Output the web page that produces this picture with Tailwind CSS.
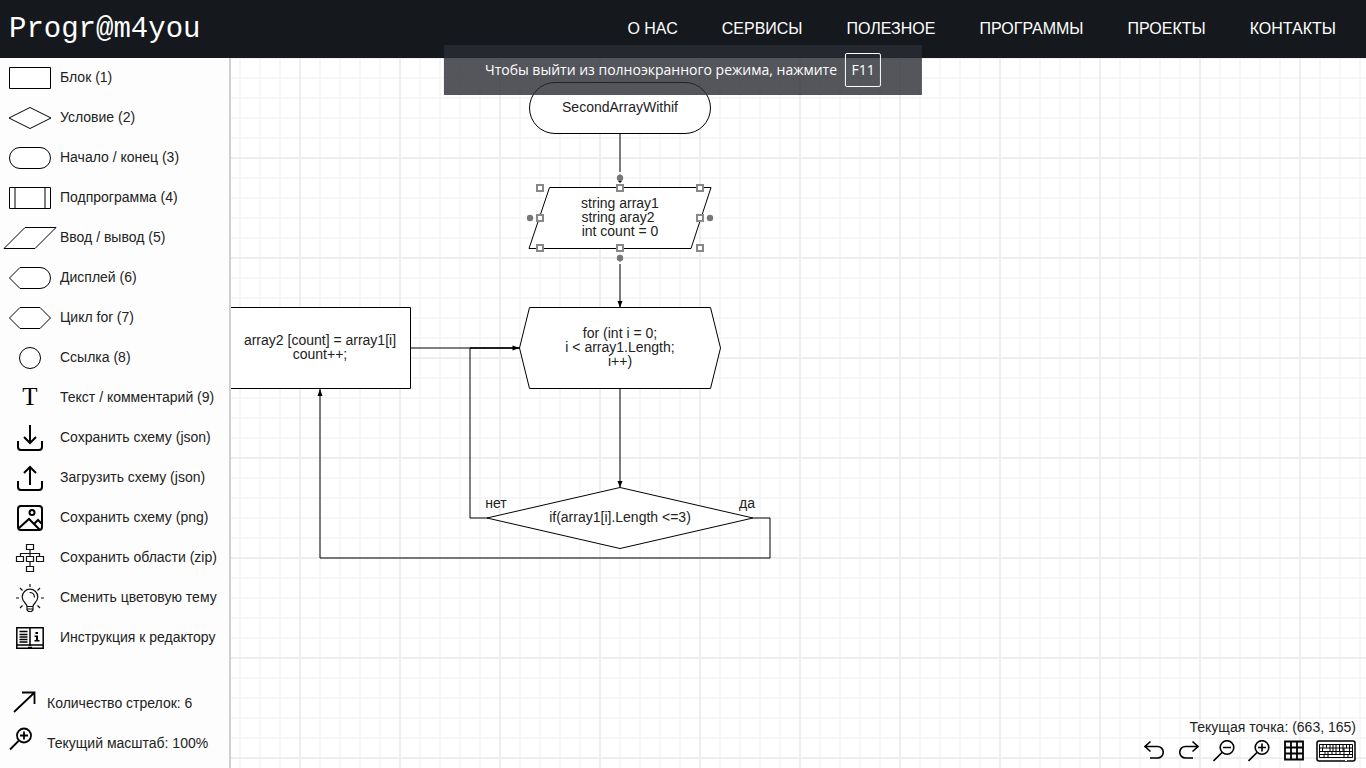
<!DOCTYPE html>
<html lang="ru">
<head>
<meta charset="utf-8">
<meta name="viewport" content="width=device-width, initial-scale=1">
<title>Progr@m4you</title>
<script src="https://cdn.jsdelivr.net/npm/@tailwindcss/browser@4"></script>
</head>
<body class="relative flex h-screen flex-col overflow-hidden bg-white font-['Liberation_Sans',Arial,sans-serif] text-sm text-[#222]">

<header class="flex h-[58px] shrink-0 items-center justify-between bg-[#15191d] pr-[30px] pl-[9px] text-white">
  <a href="#" class="pt-0.5 font-['Liberation_Mono',monospace] text-[29px] leading-8">Progr@m4you</a>
  <nav class="flex gap-11 text-base">
    <a href="#">О НАС</a>
    <a href="#">СЕРВИСЫ</a>
    <a href="#">ПОЛЕЗНОЕ</a>
    <a href="#">ПРОГРАММЫ</a>
    <a href="#">ПРОЕКТЫ</a>
    <a href="#">КОНТАКТЫ</a>
  </nav>
</header>

<div class="flex min-h-0 flex-1">
  <aside class="flex w-[231px] shrink-0 flex-col border-r-2 border-[#d0d0d0] bg-[#fdfdfd] pb-[5px]">
    <button class="flex h-10 items-center pb-0.5 text-left whitespace-nowrap"><svg class="mt-0.5 h-10 w-[60px] shrink-0" viewBox="0 0 60 40" fill="#fff" stroke="#000"><path d="M9.5 9.5h41v21h-41z"/></svg>Блок (1)</button>
    <button class="flex h-10 items-center pb-0.5 text-left whitespace-nowrap"><svg class="mt-0.5 h-10 w-[60px] shrink-0" viewBox="0 0 60 40" fill="#fff" stroke="#000"><path d="M9 20 30 9.500 51 20 30 30.500z"/></svg>Условие (2)</button>
    <button class="flex h-10 items-center pb-0.5 text-left whitespace-nowrap"><svg class="mt-0.5 h-10 w-[60px] shrink-0" viewBox="0 0 60 40" fill="#fff" stroke="#000"><rect x="9.500" y="9.500" width="41" height="21" rx="10.500"/></svg>Начало / конец (3)</button>
    <button class="flex h-10 items-center pb-0.5 text-left whitespace-nowrap"><svg class="mt-0.5 h-10 w-[60px] shrink-0" viewBox="0 0 60 40" fill="#fff" stroke="#000"><path d="M9.500 9.500h41v21h-41zM15 10v20M45 10v20"/></svg>Подпрограмма (4)</button>
    <button class="flex h-10 items-center pb-0.5 text-left whitespace-nowrap"><svg class="mt-0.5 h-10 w-[60px] shrink-0" viewBox="0 0 60 40" fill="#fff" stroke="#000"><path d="M4 30.500 25 9.500H56L35 30.500z"/></svg>Ввод / вывод (5)</button>
    <button class="flex h-10 items-center pb-0.5 text-left whitespace-nowrap"><svg class="mt-0.5 h-10 w-[60px] shrink-0" viewBox="0 0 60 40" fill="#fff" stroke="#000"><path d="M9.500 20 20 9.500H40a10.500 10.500 0 0 1 0 21H20z"/></svg>Дисплей (6)</button>
    <button class="flex h-10 items-center pb-0.5 text-left whitespace-nowrap"><svg class="mt-0.5 h-10 w-[60px] shrink-0" viewBox="0 0 60 40" fill="#fff" stroke="#000"><path d="M9.500 20 20 9.500H40L50.500 20 40 30.500H20z"/></svg>Цикл for (7)</button>
    <button class="flex h-10 items-center pb-0.5 text-left whitespace-nowrap"><svg class="mt-0.5 h-10 w-[60px] shrink-0" viewBox="0 0 60 40" fill="#fff" stroke="#000"><circle cx="30" cy="20" r="10.500"/></svg>Ссылка (8)</button>
    <button class="flex h-10 items-center pb-0.5 text-left whitespace-nowrap"><span class="w-[60px] shrink-0 text-center font-['Liberation_Serif',serif] text-[25px] leading-8 text-black">T</span>Текст / комментарий (9)</button>
    <button class="flex h-10 items-center pb-0.5 text-left whitespace-nowrap"><svg class="mt-0.5 h-10 w-[60px] shrink-0" viewBox="0 0 60 40" fill="none" stroke="#000" stroke-width="2"><path d="M30 7v18M24 19l6 6 6-6M18 23v6q0 3 3 3h18q3 0 3-3v-6"/></svg>Сохранить схему (json)</button>
    <button class="flex h-10 items-center pb-0.5 text-left whitespace-nowrap"><svg class="mt-0.5 h-10 w-[60px] shrink-0" viewBox="0 0 60 40" fill="none" stroke="#000" stroke-width="2"><path d="M30 27V9M24 15l6-6 6 6M18 23v6q0 3 3 3h18q3 0 3-3v-6"/></svg>Загрузить схему (json)</button>
    <button class="flex h-10 items-center pb-0.5 text-left whitespace-nowrap"><svg class="mt-0.5 h-10 w-[60px] shrink-0" viewBox="0 0 60 40" fill="none" stroke="#000" stroke-width="2"><rect x="18" y="8" width="24" height="24" rx="3"/><circle cx="32" cy="14.500" r="2.500"/><path d="M19 30l10-9 11 11M34 26l4-4 4 4"/></svg>Сохранить схему (png)</button>
    <button class="flex h-10 items-center pb-0.5 text-left whitespace-nowrap"><svg class="mt-0.5 h-10 w-[60px] shrink-0" viewBox="0 0 60 40" fill="none" stroke="#111" stroke-width="1.200"><path d="M26.500 6.500h7v5h-7zM16.500 18.500h7v5h-7zM26.500 18.500h7v5h-7zM36.500 18.500h7v5h-7zM26.500 28.500h7v5h-7zM30 12v6M30 24v4M20.500 18v-2.500h19V18"/></svg>Сохранить области (zip)</button>
    <button class="flex h-10 items-center pb-0.5 text-left whitespace-nowrap"><svg class="mt-0.5 h-10 w-[60px] shrink-0" viewBox="0 0 60 40" fill="none" stroke="#111" stroke-width="1.200"><path d="M27 28.500c0-3-4.800-4.500-4.800-9.500a7.800 7.800 0 0 1 15.600 0c0 5-4.800 6.500-4.800 9.500zM27 28.500v3.500l1.500 1.500h3l1.500-1.500v-3.500M27 31h6M29.500 14.500c3 0 5 2 5 5M30 6v3M16 20h3M41 20h3M20 10l2.500 2.500M40 10l-2.500 2.500M20 30l2.500-2.500M40 30l-2.500-2.500"/></svg>Сменить цветовую тему</button>
    <button class="flex h-10 items-center pb-0.5 text-left whitespace-nowrap"><svg class="mt-0.5 h-10 w-[60px] shrink-0" viewBox="0 0 60 40" fill="none" stroke="#000"><path stroke-width="1.500" d="M16.800 9.800h26.400v20.400H16.800zM30 10v18M17 27h26"/><path stroke-width="1.300" d="M19.500 13.500h8M19.500 16.500h8M19.500 19h8M19.500 21.500h8M19.500 24h8M28 29.500h4"/><path stroke="none" fill="#000" d="M35.500 14h2.500v2h-2.500zM34.500 17.500H38V22h1.500v1.500h-5V22H36v-3h-1.500z"/></svg>Инструкция к редактору</button>

    <div class="mt-auto flex h-10 items-center whitespace-nowrap"><svg class="h-10 w-[47px] shrink-0" viewBox="0 0 47 40" fill="none" stroke="#000" stroke-width="1.800"><path d="M14 29 34 10M22 9.500h12.500v11.500"/></svg>Количество стрелок: 6</div>
    <div class="flex h-10 items-center whitespace-nowrap"><svg class="h-10 w-[47px] shrink-0" viewBox="0 0 47 40" fill="none" stroke="#000" stroke-width="1.800"><circle cx="24" cy="12.500" r="7"/><path d="M24 8.500v8M20 12.500h8M18.500 18 10 26.500"/></svg>Текущий масштаб: 100%</div>
  </aside>

  <main class="relative min-w-0 flex-1 overflow-hidden">
    <svg class="block h-full w-full" fill="#fff" stroke="#000">
      <defs>
        <pattern id="grid" x="-10" y="48" width="100" height="100" patternUnits="userSpaceOnUse">
          <path d="M30 0v100M50 0v100M70 0v100M90 0v100M0 30h100M0 50h100M0 70h100M0 90h100" stroke="#f7f7f7" stroke-width="2"/>
          <path d="M10 0v100M0 10h100" stroke="#eeeeee" stroke-width="2"/>
        </pattern>
      </defs>
      <g transform="translate(-231 -58)">
        <rect x="231" y="58" width="4000" height="3000" fill="url(#grid)" stroke="none"/>
        <g fill="none">
          <path d="M620 134v38M620 264v43M620 389v98M411 348h109M488 518h-18V348h50M753 518h17v40H320V389"/>
          <path d="M470 348h50"/>
        </g>
        <rect x="529.500" y="82.500" width="181" height="51" rx="25.500"/>
        <path d="M549.500 187.500H711L691 248.500H529z"/>
        <path d="M529.500 307.500h181L720.500 348l-10 40.500h-181L519.500 348z"/>
        <path d="M220.500 307.500h190v81h-190z"/>
        <path d="M487 518 620 487.500 753 518 620 548.500z"/>
        <g fill="#000" stroke="none">
          <path d="M620 307.500l-2.500-6.500h5zM620 487.500l-2.500-6.500h5zM519.500 348l-7-2.500v5zM320 389l-2.500 7h5zM618 181h4l-2 2z"/>
        </g>
        <g fill="#777" stroke="none">
          <circle cx="620" cy="178" r="3.200"/><circle cx="620" cy="258" r="3.200"/><circle cx="530" cy="218" r="3.200"/><circle cx="710" cy="218" r="3.200"/>
          <path d="M620 174l2.500 2.500h-5zM620 262l2.500-2.500h-5z"/>
        </g>
        <path stroke="#888" stroke-width="2" d="M537 185h6v6h-6zM617 185h6v6h-6zM697 185h6v6h-6zM537 215h6v6h-6zM697 215h6v6h-6zM537 245h6v6h-6zM617 245h6v6h-6zM697 245h6v6h-6z"/>
        <g fill="#222" stroke="none" text-anchor="middle" class="text-sm">
          <text x="620" y="112">SecondArrayWithif</text>
          <text x="620" y="208">string array1</text>
          <text x="618" y="222">string aray2</text>
          <text x="620" y="236">int count = 0</text>
          <text x="620" y="338">for (int i = 0;</text>
          <text x="620" y="352">i &lt; array1.Length;</text>
          <text x="620" y="366">i++)</text>
          <text x="320" y="345">array2 [count] = array1[i]</text>
          <text x="320" y="359">count++;</text>
          <text x="620" y="522">if(array1[i].Length &lt;=3)</text>
          <text x="496" y="508">нет</text>
          <text x="747" y="508">да</text>
        </g>
      </g>
    </svg>

    <div class="absolute right-[10px] bottom-[6px] flex flex-col items-end">
      <p class="leading-5">Текущая точка: (663, 165)</p>
      <div class="mt-[3px] flex h-[22px] items-center">
        <button class="flex w-[35px] justify-center" aria-label="Отменить"><svg class="h-[22px] w-5" viewBox="0 0 20 22" fill="none" stroke="#000" stroke-width="1.600"><path d="M6.500 1.500 1 6.500l5.500 5M1 6.500h12.500a5.700 5.700 0 0 1 0 11.500H6"/></svg></button>
        <button class="flex w-[35px] justify-center" aria-label="Повторить"><svg class="h-[22px] w-5" viewBox="0 0 20 22" fill="none" stroke="#000" stroke-width="1.600"><path d="M13.500 1.500 19 6.500l-5.500 5M19 6.500H6.500a5.700 5.700 0 0 0 0 11.500H14"/></svg></button>
        <button class="flex w-[35px] justify-center" aria-label="Уменьшить"><svg class="h-[22px] w-[22px]" viewBox="0 0 22 22" fill="none" stroke="#000" stroke-width="1.600"><circle cx="14" cy="7.500" r="6.800"/><path d="M10 7.500h8M9 12.500.5 21"/></svg></button>
        <button class="flex w-[35px] justify-center" aria-label="Увеличить"><svg class="h-[22px] w-[22px]" viewBox="0 0 22 22" fill="none" stroke="#000" stroke-width="1.600"><circle cx="14" cy="7.500" r="6.800"/><path d="M10 7.500h8M14 3.500v8M9 12.500.5 21"/></svg></button>
        <button class="flex w-[35px] justify-center" aria-label="Сетка"><svg class="h-[22px] w-5" viewBox="0 0 20 22" fill="none" stroke="#000" stroke-width="1.800"><path d="M1 1.500h18v18H1zM7 1v19M13 1v19M1 7.500h18M1 13.500h18"/></svg></button>
        <button class="ml-[5px]" aria-label="Горячие клавиши"><svg class="h-[22px] w-10" viewBox="0 0 40 22" fill="none" stroke="#000"><rect x="1" y="1" width="38" height="20" rx="2" stroke-width="1.500"/><path d="M3.500 4.500h33v13h-33zM4 8h32M4 11.500h32M4 14.500h32M7 4v4M10.500 4v4M14 4v7M17 4v7M20 4v10M23.500 4v7M27 4v7M30.500 4v4M33.500 4v10M6.500 8v3M9 11v3M12 11v6M16 11v3M24 11v3M28 8v9M8 14v3M32 14v3"/><path stroke="#fff" d="M29 20.500h2"/></svg></button>
      </div>
    </div>
  </main>
</div>

<div class="absolute top-[45px] left-1/2 flex h-[50px] -translate-x-1/2 items-center gap-2 bg-[rgb(41,44,51)]/80 px-[41px] font-['Open_Sans','Noto_Sans',sans-serif] text-sm whitespace-nowrap text-white">
  <span>Чтобы выйти из полноэкранного режима, нажмите</span>
  <kbd class="flex h-[34px] w-9 items-center justify-center rounded-xs border border-white font-['Open_Sans','Noto_Sans',sans-serif]">F11</kbd>
</div>
</body>
</html>
